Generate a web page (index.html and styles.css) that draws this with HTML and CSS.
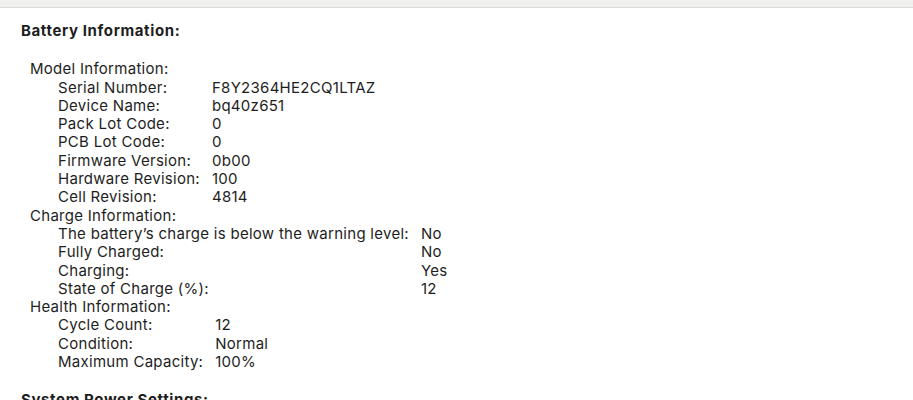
FILE: index.html
```html
<!DOCTYPE html>
<html>
<head>
<meta charset="utf-8">
<link rel="stylesheet" href="styles.css">
</head>
<body>
<div class="topbar"></div>
<div class="content">
  <h2 class="section-title">Battery Information:</h2>
  <div class="group">
    <div class="group-title">Model Information:</div>
    <div class="kv">
      <span>Serial Number:</span><span>F8Y2364HE2CQ1LTAZ</span>
      <span>Device Name:</span><span>bq40z651</span>
      <span>Pack Lot Code:</span><span>0</span>
      <span>PCB Lot Code:</span><span>0</span>
      <span>Firmware Version:</span><span>0b00</span>
      <span>Hardware Revision:</span><span>100</span>
      <span>Cell Revision:</span><span>4814</span>
    </div>
    <div class="group-title">Charge Information:</div>
    <div class="kv">
      <span>The battery’s charge is below the warning level:</span><span>No</span>
      <span>Fully Charged:</span><span>No</span>
      <span>Charging:</span><span>Yes</span>
      <span>State of Charge (%):</span><span>12</span>
    </div>
    <div class="group-title">Health Information:</div>
    <div class="kv">
      <span>Cycle Count:</span><span>12</span>
      <span>Condition:</span><span>Normal</span>
      <span>Maximum Capacity:</span><span>100%</span>
    </div>
  </div>
  <h2 class="section-title">System Power Settings:</h2>
</div>
</body>
</html>
```
FILE: styles.css
```css
html, body {
  margin: 0;
  padding: 0;
  background: #ffffff;
}
body {
  font-family: Inter, "Liberation Sans", Arial, sans-serif;
  font-size: 15px;
  line-height: 18.3px;
  letter-spacing: 0.28px;
  color: #1e1e1e;
  overflow: hidden;
  height: 400px;
}
.topbar {
  height: 7px;
  background: #f0f0ef;
  border-bottom: 1px solid #dadada;
}
.content {
  padding: 14px 0 0 21px;
}
.section-title {
  margin: 0;
  font-size: 15px;
  font-weight: bold;
  line-height: 18.3px;
  letter-spacing: 0.62px;
}
.group {
  margin: 20px 0 20px 9px;
}
.kv {
  display: grid;
  grid-template-columns: max-content max-content;
  column-gap: 12px;
  padding-left: 28px;
}
```
